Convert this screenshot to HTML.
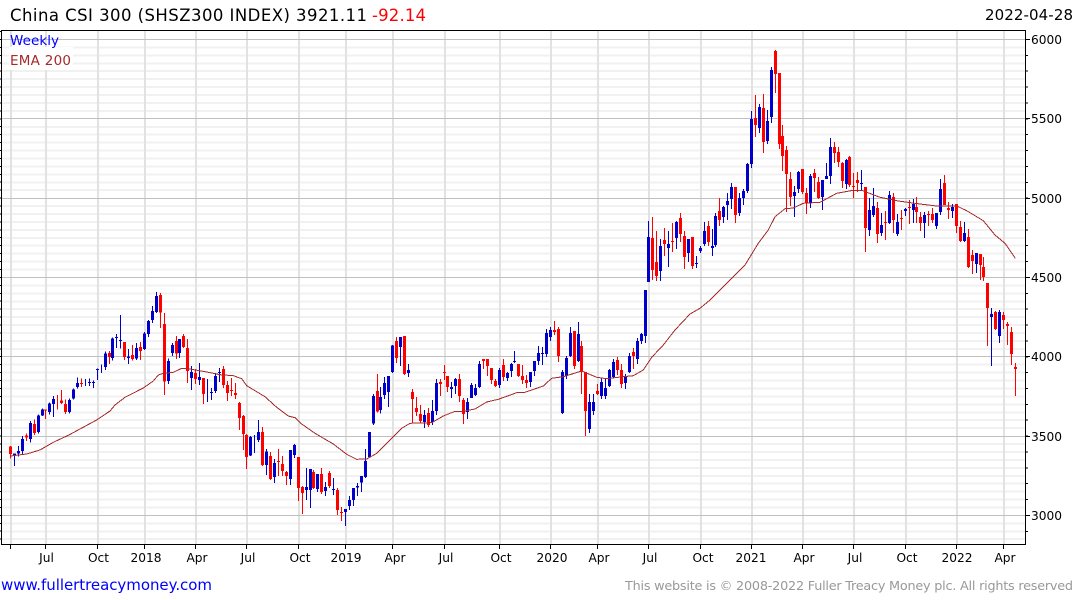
<!DOCTYPE html>
<html><head><meta charset="utf-8"><title>China CSI 300</title>
<style>
html,body{margin:0;padding:0;background:#fff}
svg{display:block}
text{font-family:"DejaVu Sans","Liberation Sans",sans-serif}
.c path{fill:none;shape-rendering:crispEdges}
.bw{stroke:#0000cd;stroke-width:3}.bb{stroke:#0000cd;stroke-width:9}
.rw{stroke:#f00;stroke-width:3}.rb{stroke:#f00;stroke-width:9}
</style></head><body>
<svg width="1075" height="600" viewBox="0 0 1075 600" xmlns="http://www.w3.org/2000/svg">
<rect width="1075" height="600" fill="#fff"/>
<!-- minor grid -->
<path shape-rendering="crispEdges" fill="none" stroke="#f1f1f1" stroke-width="2" d="M2 47.4H1025M2 55.4H1025M2 63.3H1025M2 71.2H1025M2 79.2H1025M2 87.1H1025M2 95H1025M2 103H1025M2 110.9H1025M2 126.8H1025M2 134.7H1025M2 142.6H1025M2 150.5H1025M2 158.5H1025M2 166.4H1025M2 174.3H1025M2 182.3H1025M2 190.2H1025M2 206H1025M2 214H1025M2 221.9H1025M2 229.9H1025M2 237.8H1025M2 245.7H1025M2 253.6H1025M2 261.6H1025M2 269.5H1025M2 285.4H1025M2 293.4H1025M2 301.3H1025M2 309.2H1025M2 317.2H1025M2 325.1H1025M2 333H1025M2 340.9H1025M2 348.9H1025M2 364.7H1025M2 372.7H1025M2 380.6H1025M2 388.5H1025M2 396.5H1025M2 404.4H1025M2 412.3H1025M2 420.2H1025M2 428.2H1025M2 444H1025M2 452H1025M2 459.9H1025M2 467.8H1025M2 475.8H1025M2 483.7H1025M2 491.6H1025M2 499.5H1025M2 507.5H1025M2 523.3H1025M2 531.3H1025M2 539.2H1025"/>
<!-- vertical grid -->
<path shape-rendering="crispEdges" fill="none" stroke="#e2e2e2" stroke-width="2" d="M11 31V544M46 31V544M98 31V544M145 31V544M196 31V544M247 31V544M299 31V544M346 31V544M393 31V544M445 31V544M500 31V544M551 31V544M598 31V544M649 31V544M701 31V544M752 31V544M803 31V544M854 31V544M906 31V544M957 31V544M1004 31V544"/>
<rect x="9" y="47" width="64" height="23" fill="#fff"/>
<!-- major grid -->
<path shape-rendering="crispEdges" fill="none" stroke="#c0c0c0" d="M2 39.5H1025M2 118.5H1025M2 198.5H1025M2 277.5H1025M2 356.5H1025M2 436.5H1025M2 515.5H1025"/>
<!-- candles -->
<g class="c" transform="translate(0 280) scale(.33333)">
<path class="bw" d="M43 520V558M55 498V530M67 468V522M91 423V488M115 403V460M127 385V408M148 368V403M160 348V411M208 355V400M220 326V359M232 292V326M256 297V318M268 295V318M280 302V324M292 265V300M304 254V279M316 215V270M337 172V242M349 162V204M361 105V205M385 207V252M409 189V240M433 156V210M445 120V171M457 78V129M469 36V99M505 236V312M517 189V228M538 177V234M574 258V330M598 249V315M622 297V366M634 324V360M646 279V339M658 264V306M751 468V528M763 465V519M775 420V486M799 507V585M823 537V609M871 510V615M883 492V534M919 564V660M931 567V684M952 582V636M976 606V648M1000 594V645M1036 687V738M1048 648V690M1060 624V678M1072 609V648M1084 588V636M1096 507V594M1108 456V534"/>
<path class="bb" d="M43 521V528M55 513V520M67 477V513M91 429V477M115 407V456M127 388V406M148 370V396M160 357V372M208 360V396M220 328V356M232 309V321M268 306V309M280 306V309M292 267V270M316 220V261M337 175V234M349 171V174M361 180V183M385 229V234M409 204V236M433 161V207M445 123V162M457 93V120M469 48V96M505 243V303M517 195V219M538 177V219M574 276V294M598 291V300M634 336V339M646 288V333M658 276V279M751 471V526M775 456V480M799 514V555M823 549V591M871 510V597M883 495V525M919 621V630M931 567V630M952 582V627M976 621V633M1000 627V630M1036 687V696M1048 660V678M1060 624V660M1072 618V623M1084 588V608M1096 543V591M1108 456V531"/>
<path class="rw" d="M31 498V535M79 460V483M103 418V465M136 388V417M172 345V388M184 330V372M196 358V402M244 296V321M328 213V252M373 186V240M397 195V242M421 186V240M481 39V144M493 99V345M529 168V237M550 162V204M562 177V309M586 267V312M610 294V372M670 258V324M682 303V363M694 294V348M706 309V357M718 366V450M730 405V510M739 462V567M787 441V558M811 516V600M835 507V588M847 528V588M859 573V615M895 531V663M907 618V702M940 570V627M964 564V642M988 573V624M1012 624V705M1024 681V723"/>
<path class="rb" d="M31 500V522M79 467V473M103 432V459M136 388V392M184 361V369M196 372V396M244 309V312M328 219V231M373 186V231M397 225V237M421 201V213M481 45V98M493 132V305M529 183V220M550 168V201M562 204V273M586 279V297M610 294V342M670 267V315M682 315V339M694 330V333M706 339V345M718 369V414M730 408V462M739 465V531M787 456V555M811 528V597M835 543V546M847 552V573M859 576V588M895 531V624M907 621V639M940 576V624M964 582V636M988 579V618M1012 630V690M1024 696V699"/>
</g>
<g class="c" transform="translate(360 280) scale(.33333)">
<path class="bw" d="M40 342V435M61 321V400M73 291V357M85 288V381M97 195V279M121 171V258M145 252V291M193 390V444M217 360V435M229 297V405M274 306V354M286 294V342M322 354V417M334 309V354M346 312V348M358 243V324M418 264V324M442 276V303M454 249V291M463 213V249M511 276V321M523 243V288M535 198V255M547 201V255M559 147V231M571 141V183M607 270V402M619 228V297M631 141V231M655 126V246M688 342V459M700 342V405M724 294V357M736 297V357M748 267V321M760 237V294M796 282V327M808 219V279M832 174V252M844 159V192M856 30V189"/>
<path class="bb" d="M40 348V430M61 351V390M73 309V345M85 288V336M97 197V276M121 171V201M145 270V279M193 405V426M217 393V426M229 309V393M274 321V327M286 297V318M322 366V396M334 315V354M346 324V345M358 252V321M418 270V315M442 279V294M454 252V273M463 243V246M511 276V306M523 243V273M535 219V243M547 219V222M559 159V222M571 150V171M607 276V399M619 234V288M631 159V228M655 162V243M688 366V447M700 366V393M724 306V348M736 324V348M748 270V318M760 246V291M796 291V309M808 228V276M832 183V237M844 162V183M856 30V168"/>
<path class="rw" d="M52 282V398M109 171V249M133 168V285M157 327V430M169 351V408M181 375V430M205 384V441M241 297V348M253 255V300M262 288V336M298 282V366M310 354V432M370 237V267M382 237V288M394 264V312M406 297V321M430 237V303M475 252V291M487 255V312M499 285V324M583 123V165M595 141V246M643 153V267M664 183V342M676 276V468M712 312V345M772 231V285M784 252V324M820 204V267"/>
<path class="rb" d="M52 333V394M109 183V234M133 168V282M157 336V357M169 384V396M181 402V423M205 399V435M241 306V312M253 276V279M262 288V321M298 297V348M310 360V402M370 237V243M382 237V258M394 264V300M406 303V318M430 255V291M475 252V288M487 288V300M499 300V309M583 150V156M595 147V228M643 153V258M664 198V276M676 276V393M712 333V342M772 240V270M784 270V312M820 216V228"/>
</g>
<g class="c" transform="translate(630 40) scale(.33333)">
<path class="bw" d="M55 543V726M91 597V723M115 573V681M139 543V627M175 597V666M199 648V684M211 618V639M223 546V618M247 567V648M256 519V621M280 498V549M292 459V540M304 429V507M328 459V528M340 447V495M352 369V459M364 213V384M388 192V279M412 210V312M424 81V249M493 438V531M505 393V459M541 402V504M577 420V510M589 369V417M601 294V432M649 357V447"/>
<path class="bb" d="M55 591V726M91 618V693M115 612V624M139 546V594M175 597V639M199 669V672M211 624V633M223 573V612M247 618V624M256 528V615M280 501V531M292 483V495M304 441V477M328 474V519M340 453V474M352 372V453M364 237V372M388 201V264M412 243V303M424 90V231M493 456V468M505 396V447M541 408V489M577 420V471M589 408V417M601 321V408M649 360V432"/>
<path class="rw" d="M67 531V720M79 573V723M103 564V648M127 549V636M151 519V606M163 573V687M187 591V687M235 543V618M268 474V558M316 441V549M376 165V291M400 162V339M436 30V159M448 99V327M457 255V393M469 318V516M481 396V498M517 387V462M529 444V522M553 387V456M565 411V477M613 306V369M625 321V381M637 366V444"/>
<path class="rb" d="M67 594V690M79 666V708M103 600V612M127 603V606M151 534V582M163 588V651M187 591V678M235 558V606M268 513V540M316 441V525M376 234V255M400 204V306M436 33V102M448 99V312M457 288V348M469 330V402M481 417V471M517 387V456M529 459V489M553 399V414M565 426V474M613 321V339M625 336V366M637 369V423"/>
</g>
<g class="c" transform="translate(840 140) scale(.33333)">
<path class="rw" d="M28 48V141M40 99V174M52 96V156M76 141V336M112 186V309M136 213V300M160 159V279M184 210V270M208 180V252M229 171V249M241 216V273M265 213V258M277 204V249M313 105V195M325 186V237M349 192V279M361 243V306M385 267V384M397 330V402M421 342V420M430 351V423M442 429V618M466 513V570M490 516V567M502 546V615M514 561V675M526 669V768"/>
<path class="rb" d="M28 51V135M40 138V141M52 120V129M76 141V264M112 204V282M136 246V249M160 171V240M184 234V237M208 201V204M229 201V216M241 231V249M265 222V225M277 222V240M313 129V195M325 204V210M349 192V258M361 261V303M385 291V381M397 345V363M421 342V375M430 381V411M442 429V504M466 516V567M490 525V540M502 552V558M514 576V642M526 681V687"/>
<path class="bw" d="M64 90V150M88 174V288M100 144V231M124 219V288M148 153V252M172 222V288M196 204V228M220 177V249M253 216V294M289 219V267M301 117V225M337 192V234M373 246V306M409 339V399M454 504V678M478 510V609"/>
<path class="bb" d="M64 129V132M88 210V270M100 198V225M124 255V279M148 165V249M172 246V282M196 207V213M220 192V210M253 225V249M289 219V258M301 147V216M337 201V213M373 279V303M409 339V372M454 522V531M478 516V588"/>
</g>
<!-- EMA -->
<polyline fill="none" stroke="#a52a2a" stroke-width="1" shape-rendering="crispEdges" points="10.3,456 26.7,454 40,450 53.3,442.3 68.3,435.3 80,429 96.7,420 110,411 115,405 125,397.3 143.3,388 153.3,381 158.3,375 163.3,373.3 173.3,372.3 181.7,368.3 190,369 206.7,372 220,374.7 233.3,375.7 241.7,378.7 246.7,385.7 265,396.7 276.7,407.3 288.3,416 295,417.7 301.7,424 315,433.3 333.3,444 346.7,454.3 356.7,459.3 366.7,459 376.7,453.3 390,440 401.7,428.3 410,423.3 431.7,422.7 443.3,416 455,411.3 463.3,411.3 475,409 486.7,402 498.3,399.3 516.7,392.7 525,392.3 543.3,386 551.7,378.3 563.3,376.7 581.7,371 596.7,377.3 606.7,378.7 623.3,376.7 633.3,375.7 643.3,370 651.7,357.3 663.3,345 675,330 690,314 700,308.3 710,300 716.7,293.3 733.3,276.7 745,265 758.3,243.3 768.3,230 775,216.7 785,208.7 793.3,208 803.3,203.3 820,202.3 836.7,193.3 853.3,190.3 861.7,190.3 880,197.3 898.3,201 920,204 936.7,206 956.7,206 966.7,210.7 983.3,220.7 995,235 1005,243.3 1015.3,258.3"/>
<!-- frame -->
<path shape-rendering="crispEdges" fill="none" stroke="#000" d="M1.5 30.5H1025.5V544.5H1.5Z"/>
<line x1="0.5" x2="0.5" y1="31" y2="544" stroke="#000" stroke-dasharray="1 6.932" shape-rendering="crispEdges"/>
<line x1="1027" x2="1027" y1="39" y2="535" stroke="#000" stroke-width="2" stroke-dasharray="1 14.864" shape-rendering="crispEdges"/>
<path shape-rendering="crispEdges" fill="none" stroke="#000" d="M1026 39.5H1030M1026 118.5H1030M1026 198.5H1030M1026 277.5H1030M1026 356.5H1030M1026 436.5H1030M1026 515.5H1030"/>
<path shape-rendering="crispEdges" fill="none" stroke="#000" d="M10.5 545V549M45.5 545V549M97.5 545V549M144.5 545V549M195.5 545V549M246.5 545V549M298.5 545V549M345.5 545V549M392.5 545V549M444.5 545V549M499.5 545V549M550.5 545V549M597.5 545V549M648.5 545V549M700.5 545V549M751.5 545V549M802.5 545V549M853.5 545V549M905.5 545V549M956.5 545V549M1003.5 545V549"/>
<!-- title -->
<text x="10" y="21" font-size="16.5" fill="#000" textLength="357" lengthAdjust="spacing">China CSI 300 (SHSZ300 INDEX) 3921.11</text>
<text x="372" y="21" font-size="16.5" fill="#f00" textLength="54" lengthAdjust="spacing">-92.14</text>
<text x="985" y="20" font-size="15" fill="#000" textLength="88" lengthAdjust="spacing">2022-04-28</text>
<text x="10" y="45" font-size="13.5" fill="#0000ff" textLength="49" lengthAdjust="spacing">Weekly</text>
<text x="10" y="65" font-size="13.5" fill="#a52a2a" textLength="61" lengthAdjust="spacing">EMA 200</text>
<!-- right axis -->
<g font-size="12.2" fill="#000">
<text x="1031" y="44">6000</text><text x="1031" y="123">5500</text><text x="1031" y="203">5000</text><text x="1031" y="282">4500</text><text x="1031" y="361">4000</text><text x="1031" y="441">3500</text><text x="1031" y="520">3000</text>
</g>
<!-- bottom axis -->
<g font-size="12.2" fill="#000" text-anchor="middle">
<text x="46.5" y="562">Jul</text><text x="98.5" y="562">Oct</text><text x="146" y="562">2018</text><text x="197" y="562">Apr</text><text x="248" y="562">Jul</text><text x="300" y="562">Oct</text><text x="346" y="562">2019</text><text x="395" y="562">Apr</text><text x="446" y="562">Jul</text><text x="501" y="562">Oct</text><text x="552" y="562">2020</text><text x="599" y="562">Apr</text><text x="650" y="562">Jul</text><text x="703" y="562">Oct</text><text x="751" y="562">2021</text><text x="804" y="562">Apr</text><text x="855" y="562">Jul</text><text x="907" y="562">Oct</text><text x="957" y="562">2022</text><text x="1005" y="562">Apr</text>
</g>
<!-- footer -->
<text x="1" y="590" font-size="15" fill="#0000ff" textLength="211" lengthAdjust="spacing">www.fullertreacymoney.com</text>
<text x="625" y="590" font-size="12.8" fill="#999999" textLength="448" lengthAdjust="spacing">This website is © 2008-2022 Fuller Treacy Money plc. All rights reserved</text>
</svg>
</body></html>
